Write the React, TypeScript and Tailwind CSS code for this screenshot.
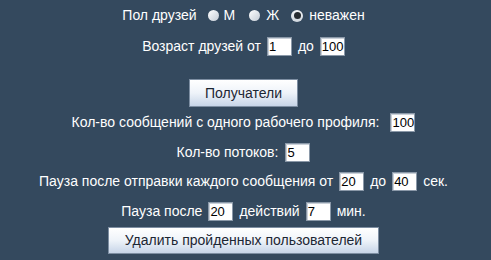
import React from 'react';

const Field: React.FC<{ value: string }> = ({ value }) => (
  <input
    defaultValue={value}
    className="w-[25px] h-[19px] shrink-0 border border-[#8a98a8] bg-white pl-[1px] pr-0 text-[13px] leading-none text-black outline-none shadow-[inset_1px_1px_0_#c9d0d8]"
  />
);

const Radio: React.FC<{ checked?: boolean }> = ({ checked }) =>
  checked ? (
    <span className="flex w-[12px] h-[12px] items-center justify-center rounded-full bg-gradient-to-b from-[#f4f6f8] to-[#cfd6de]">
      <span className="block w-[7px] h-[7px] rounded-full bg-[#262b30]" />
    </span>
  ) : (
    <span className="block w-[11px] h-[11px] rounded-full bg-gradient-to-br from-white to-[#c4ccd6]" />
  );

const Button: React.FC<{ label: string; width: string }> = ({ label, width }) => (
  <button
    className={`${width} flex items-center justify-center border border-[#7d8ea2] bg-gradient-to-b from-white via-[#eef3f9] to-[#c7d5e8] text-[14px] text-[#1c2633]`}
  >
    {label}
  </button>
);

export default function App() {
  return (
    <div className="w-[491px] h-[260px] bg-[#34495e] text-white text-[14px] leading-[19px] font-['Liberation_Sans',Arial,sans-serif] overflow-hidden">
      <div className="flex flex-col items-center pr-[4px]">
        <div className="flex items-center h-[19px] mt-[6px]">
          <span>Пол друзей</span>
          <span className="ml-[11px]"><Radio /></span>
          <span className="ml-[5px]">М</span>
          <span className="ml-[14px]"><Radio /></span>
          <span className="ml-[6px]">Ж</span>
          <span className="ml-[12px]"><Radio checked /></span>
          <span className="ml-[6px]">неважен</span>
        </div>

        <div className="flex items-center gap-[6px] h-[19px] mt-[12px]">
          <span>Возраст друзей от</span>
          <Field value="1" />
          <span>до</span>
          <Field value="100" />
        </div>

        <div className="h-[28px] mt-[23px] flex">
          <Button label="Получатели" width="w-[109px]" />
        </div>

        <div className="flex items-center gap-[11px] h-[19px] mt-[6px]">
          <span>Кол-во сообщений с одного рабочего профиля:</span>
          <Field value="100" />
        </div>

        <div className="flex items-center gap-[7px] h-[19px] mt-[11px]">
          <span>Кол-во потоков:</span>
          <Field value="5" />
        </div>

        <div className="flex items-center gap-[6px] h-[19px] mt-[10px]">
          <span>Пауза после отправки каждого сообщения от</span>
          <Field value="20" />
          <span>до</span>
          <Field value="40" />
          <span>сек.</span>
        </div>

        <div className="flex items-center gap-[6px] h-[19px] mt-[11px]">
          <span>Пауза после</span>
          <Field value="20" />
          <span>действий</span>
          <Field value="7" />
          <span>мин.</span>
        </div>

        <div className="h-[27px] mt-[6px] flex">
          <Button label="Удалить пройденных пользователей" width="w-[271px]" />
        </div>
      </div>
    </div>
  );
}
